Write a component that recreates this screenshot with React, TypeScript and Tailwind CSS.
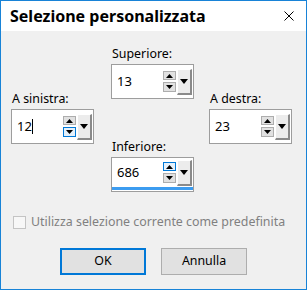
import React from 'react';

const font = { fontFamily: '"Noto Sans", "Open Sans", sans-serif' };

const Arrow = ({ up, big }: { up?: boolean; big?: boolean }) => {
  const w = big ? 8 : 7;
  const h = big ? 5 : 4;
  return (
    <svg width={w} height={h} viewBox={`0 0 ${w} ${h}`} className="block">
      {up ? (
        <path d={`M0 ${h} L${w / 2} 0 L${w} ${h} Z`} fill="#000" />
      ) : (
        <path d={`M0 0 L${w} 0 L${w / 2} ${h} Z`} fill="#000" />
      )}
    </svg>
  );
};

interface SpinProps {
  label: string;
  value: string;
  hoverUp?: boolean;
  hoverDown?: boolean;
  caret?: boolean;
  focused?: boolean;
}

const SpinField = ({ label, value, hoverUp, hoverDown, caret, focused }: SpinProps) => {
  const btn = (hover?: boolean) =>
    hover
      ? 'border-[#0078d7] bg-[#e5f1fb]'
      : 'border-[#adadad] bg-[#e1e1e1]';
  return (
    <div className="flex flex-col w-[83px]">
      <div className="h-[16px] leading-[16px] text-[12.4px] text-black mb-[2px] pl-[1px]">{label}</div>
      <div className="h-[35px] border border-[#9d9d9d] bg-white flex flex-col">
        <div className="flex-1 flex items-center">
          <div className="flex-1 pl-[5px] text-[13px] text-black flex items-center">
            <span>{value}</span>
            {caret && <span className="inline-block w-[1px] h-[15px] bg-black" />}
          </div>
          <div className="flex flex-col gap-[2px] w-[13px] mr-[1px]">
            <div className={`h-[9px] border flex items-center justify-center ${btn(hoverUp)}`}>
              <Arrow up />
            </div>
            <div className={`h-[10px] border flex items-center justify-center ${btn(hoverDown)}`}>
              <Arrow />
            </div>
          </div>
          <div className="w-[15px] h-[26px] mr-[1px] bg-[#ececec] border-t border-l border-t-white border-l-white border-r-2 border-b-2 border-r-[#8a8a8a] border-b-[#8a8a8a] flex items-center justify-center">
            <Arrow big />
          </div>
        </div>
        {focused && <div className="h-[3px] bg-[#3c9cf0] mb-[1px]" />}
      </div>
    </div>
  );
};

export default function App() {
  return (
    <div className="w-[307px] h-[290px] border border-[#1883d7] bg-[#f0f0f0] flex flex-col overflow-hidden" style={font}>
      {/* Title bar */}
      <div className="h-[30px] bg-white flex items-center justify-between pl-[9px] pr-[12px]">
        <span className="text-[16px] font-bold text-black">Selezione personalizzata</span>
        <svg width="10" height="10" viewBox="0 0 10 10">
          <path d="M0.5 0.5 L9.5 9.5 M9.5 0.5 L0.5 9.5" stroke="#000" strokeWidth="1" />
        </svg>
      </div>

      {/* Fields */}
      <div className="flex pl-[10px]">
        <div className="mt-[60px]">
          <SpinField label="A sinistra:" value="12" hoverDown caret />
        </div>
        <div className="mt-[15px] ml-[17px] flex flex-col gap-[40px]">
          <SpinField label="Superiore:" value="13" />
          <SpinField label="Inferiore:" value="686" hoverUp focused />
        </div>
        <div className="mt-[60px] ml-[15px]">
          <SpinField label="A destra:" value="23" />
        </div>
      </div>

      {/* Checkbox */}
      <div className="flex items-center mt-[21px] pl-[12px] gap-[5px]">
        <div className="w-[13px] h-[13px] border border-[#c4c4c4] bg-[#f7f7f7]" />
        <span className="text-[12.4px] text-[#808080]">Utilizza selezione corrente come predefinita</span>
      </div>

      {/* Buttons */}
      <div className="flex mt-[16px] pl-[59px] gap-[15px]">
        <button className="w-[86px] h-[27px] border-2 border-[#0078d7] bg-[#e1e1e1] text-[12.4px] text-black">OK</button>
        <button className="w-[86px] h-[27px] border border-[#adadad] bg-[#e1e1e1] text-[12.4px] text-black">Annulla</button>
      </div>
    </div>
  );
}
